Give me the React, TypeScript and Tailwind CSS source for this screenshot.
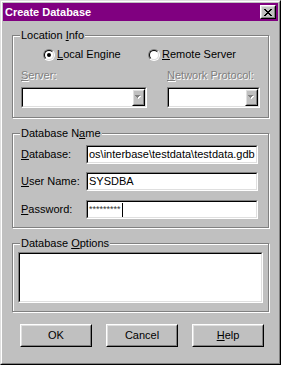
import React from 'react';

type Kids = { children?: React.ReactNode; className?: string };

const U = ({ children }: Kids) => <span className="underline underline-offset-[1px]">{children}</span>;

// sunken 3d field (edit box, combo, list)
const Sunken = ({ children, className = '' }: Kids) => (
  <div className={`flex border border-t-[#808080] border-l-[#808080] border-r-white border-b-white ${className}`}>
    <div className="flex min-w-0 flex-1 overflow-hidden border border-t-black border-l-black border-r-[#dfdfdf] border-b-[#dfdfdf] bg-white">
      {children}
    </div>
  </div>
);

// raised 3d button face
const Raised = ({ children, className = '' }: Kids) => (
  <div className={`flex border border-t-white border-l-white border-r-black border-b-black bg-[#c0c0c0] ${className}`}>
    <div className="flex flex-1 items-center justify-center border border-t-[#dfdfdf] border-l-[#dfdfdf] border-r-[#808080] border-b-[#808080]">
      {children}
    </div>
  </div>
);

const Group = ({ label, children, className = '' }: Kids & { label: React.ReactNode }) => (
  <div className={`relative ml-[9px] w-[257px] border border-[#808080] shadow-[inset_1px_1px_0_#fff,1px_1px_0_#fff] ${className}`}>
    <span className="absolute -top-[7px] left-[7px] bg-[#c0c0c0] px-[1px] leading-[13px]">{label}</span>
    {children}
  </div>
);

const Radio = ({ checked }: { checked?: boolean }) => (
  <span className="flex h-[12px] w-[12px] rounded-full border border-t-[#808080] border-l-[#808080] border-r-white border-b-white">
    <span className="flex flex-1 items-center justify-center rounded-full border border-t-black border-l-black border-r-[#dfdfdf] border-b-[#dfdfdf] bg-white">
      {checked && <span className="h-[4px] w-[4px] rounded-full bg-black" />}
    </span>
  </span>
);

const Combo = ({ className = '' }: Kids) => (
  <Sunken className={`h-[21px] ${className}`}>
    <div className="flex-1" />
    <Raised className="w-[13px]">
      <svg width="7" height="5" viewBox="0 0 7 5" shapeRendering="crispEdges">
        <path d="M1 1h5v1H1zM2 2h3v1H2zM3 3h1v1H3z" fill="#fff" />
        <path d="M0 0h5v1H0zM1 1h3v1H1zM2 2h1v1H2z" fill="#808080" />
      </svg>
    </Raised>
  </Sunken>
);

const Disabled = ({ children }: Kids) => (
  <span className="leading-[13px] text-[#808080] [text-shadow:1px_1px_0_#fff]">{children}</span>
);

const Field = ({ label, children, className = '' }: Kids & { label: React.ReactNode }) => (
  <div className={`flex items-center pl-[8px] ${className}`}>
    <span className="w-[65px] leading-[13px]">{label}</span>
    <Sunken className="h-[19px] w-[172px]">
      <div className="flex items-center whitespace-nowrap pl-[1px] leading-[13px]">{children}</div>
    </Sunken>
  </div>
);

export default function App() {
  return (
    <div className="h-[365px] w-[281px] border border-t-[#dfdfdf] border-l-[#dfdfdf] border-r-black border-b-black bg-[#c0c0c0] font-['Liberation_Sans',Arial,sans-serif] text-[11px] text-black">
      <div className="flex h-full flex-col border border-t-white border-l-white border-r-[#808080] border-b-[#808080] p-px">
        {/* title bar */}
        <div className="flex h-[18px] items-center bg-[#800080] pl-[2px] pr-[2px]">
          <span className="flex-1 font-bold leading-[13px] text-white">Create Database</span>
          <Raised className="h-[14px] w-[16px]">
            <svg width="8" height="7" viewBox="0 0 8 7" shapeRendering="crispEdges">
              <path d="M0 0h2v1H0zM6 0h2v1H6zM1 1h2v1H1zM5 1h2v1H5zM2 2h4v1H2zM3 3h2v1H3zM2 4h4v1H2zM1 5h2v1H1zM5 5h2v1H5zM0 6h2v1H0zM6 6h2v1H6z" fill="#000" />
            </svg>
          </Raised>
        </div>

        <Group label={<>Location <U>I</U>nfo</>} className="mt-[14px] h-[83px]">
          <div className="flex h-[13px] items-center pl-[30px] mt-[12px]">
            <div className="flex w-[105px] items-center gap-[2px]">
              <Radio checked />
              <span className="leading-[13px]"><U>L</U>ocal Engine</span>
            </div>
            <div className="flex items-center gap-[2px]">
              <Radio />
              <span className="leading-[13px]"><U>R</U>emote Server</span>
            </div>
          </div>
          <div className="mt-[8px] flex gap-[20px] pl-[8px]">
            <div className="flex w-[126px] flex-col gap-[5px]">
              <Disabled><U>S</U>erver:</Disabled>
              <Combo />
            </div>
            <div className="flex w-[93px] flex-col gap-[5px]">
              <Disabled><U>N</U>etwork Protocol:</Disabled>
              <Combo />
            </div>
          </div>
        </Group>

        <Group label={<>Database N<U>a</U>me</>} className="mt-[15px] h-[95px]">
          <Field label={<><U>D</U>atabase:</>} className="mt-[11px]">os\interbase\testdata\testdata.gdb</Field>
          <Field label={<><U>U</U>ser Name:</>} className="mt-[8px]">SYSDBA</Field>
          <Field label={<><U>P</U>assword:</>} className="mt-[9px]">
            <span className="text-[9px] leading-[13px] text-[#333]">*********</span>
            <span className="ml-[1px] h-[14px] w-px bg-black" />
          </Field>
        </Group>

        <Group label={<>Database <U>O</U>ptions</>} className="mt-[15px] h-[69px]">
          <Sunken className="ml-[5px] mt-[8px] h-[51px] w-[245px]" />
        </Group>

        <div className="mt-[12px] flex gap-[14px] pl-[17px]">
          <Raised className="h-[23px] w-[72px]">OK</Raised>
          <Raised className="h-[23px] w-[72px]">Cancel</Raised>
          <Raised className="h-[23px] w-[72px]"><span><U>H</U>elp</span></Raised>
        </div>
      </div>
    </div>
  );
}
